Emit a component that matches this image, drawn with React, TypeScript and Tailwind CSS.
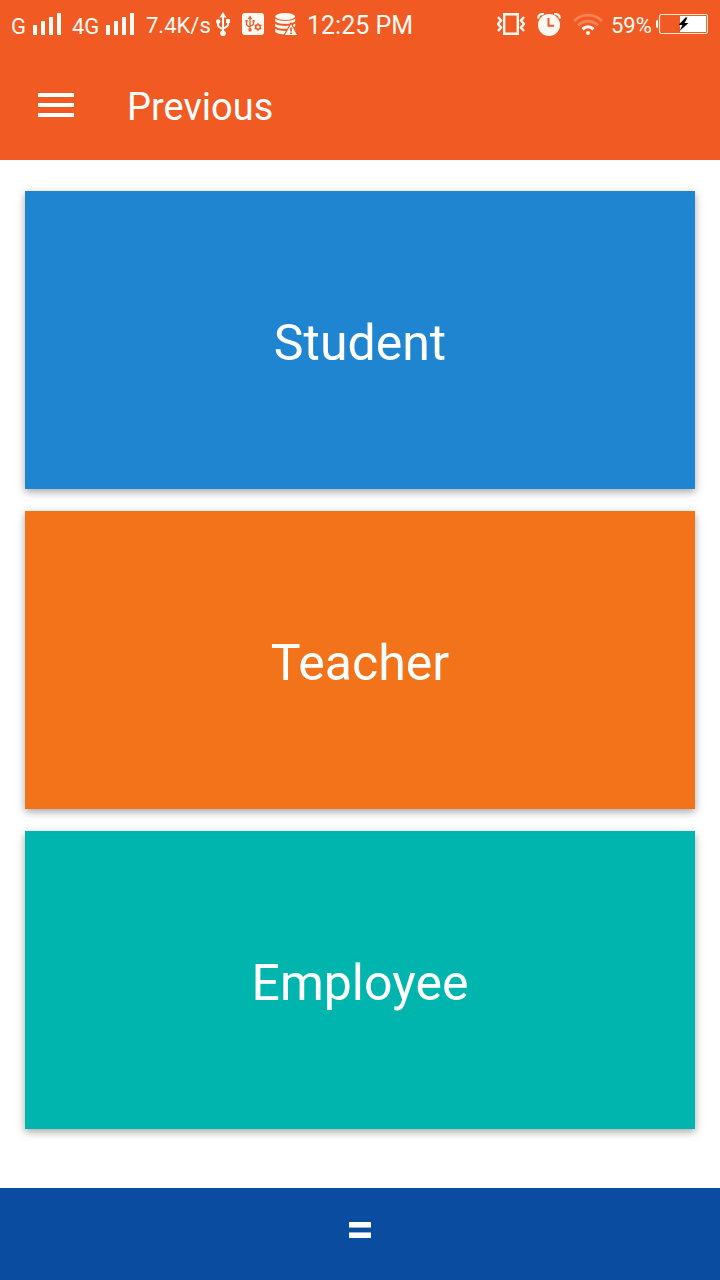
function SignalBars() {
  return (
    <svg className="h-[22px] w-7" viewBox="0 0 28 22" fill="currentColor" aria-hidden="true">
      <path d="M0 12h4v10H0zM8 8h4v14H8zM16 4h4v18h-4zM24 0h4v22h-4z" />
    </svg>
  );
}

function UsbIcon() {
  return (
    <svg className="h-6 w-[14px]" viewBox="0 0 14 24" fill="none" stroke="currentColor" strokeWidth="2" aria-hidden="true">
      <path d="M7 4v17M2 9v4c0 1.500 1 2.500 5 4M12 9v3.500c0 1.500-1 2.500-5 4" />
      <path d="M7 0l3.500 5.500h-7z" fill="currentColor" stroke="none" />
      <circle cx="2.200" cy="9.500" r="2.200" fill="currentColor" stroke="none" />
      <path d="M10 7h4v4h-4z" fill="currentColor" stroke="none" />
      <circle cx="7" cy="21.200" r="2.800" fill="currentColor" stroke="none" />
    </svg>
  );
}

function UsbSettingsIcon() {
  return (
    <svg className="h-[22px] w-[22px]" viewBox="0 0 22 22" fill="none" aria-hidden="true">
      <rect width="22" height="22" rx="3" fill="currentColor" />
      <g stroke="#f15a22" strokeWidth="1.300">
        <path d="M8 4v13M4.500 8v3c0 1.500 1 2 3.500 3M11.500 8v2.500c0 1.500-1 2-3.500 3" />
        <path d="M8 2.500l2.200 3.500H5.800zM3.500 7h2v2h-2zM10.500 7h2v2h-2z" fill="#f15a22" stroke="none" />
        <circle cx="8" cy="17" r="1.700" fill="#f15a22" stroke="none" />
        <circle cx="16" cy="14" r="2.300" strokeWidth="1.500" />
        <path d="M16 10.200v1.500M16 16.300v1.500M12.700 12.100l1.300.8M18 15.100l1.300.8M19.300 12.100l-1.300.8M14 15.100l-1.300.8" strokeWidth="1.600" />
      </g>
    </svg>
  );
}

function StorageAlertIcon() {
  return (
    <svg className="h-[23px] w-[23px]" viewBox="0 0 23 23" aria-hidden="true">
      <g fill="currentColor">
        <ellipse cx="10.200" cy="3.500" rx="10" ry="3.500" />
        <path d="M.2 5.500c2 3.200 18 3.200 20 0v2.800c-2 3.400-18 3.400-20 0z" />
        <path d="M.2 10.500c2 3.200 18 3.200 20 0v2.800c-2 3.400-18 3.400-20 0z" />
        <path d="M.2 15.500c2 3.200 18 3.200 20 0v3c-2 3.800-18 3.800-20 0z" />
      </g>
      <path d="M16 10l7 12.500H9z" fill="currentColor" stroke="#f15a22" strokeWidth="1.200" />
      <path d="M15.200 14.500h1.700v4h-1.700zM15.200 19.500h1.700v1.600h-1.700z" fill="#f15a22" />
    </svg>
  );
}

function VibrateIcon() {
  return (
    <svg className="h-[22px] w-7" viewBox="0 0 28 22" fill="none" stroke="currentColor" aria-hidden="true">
      <path d="M7.200 1.200h13.600v19.600H7.200z" strokeWidth="2.400" />
      <path d="M1 4l3 3.500-3 3.500 3 3.500L1 18M27 4l-3 3.500 3 3.500-3 3.500 3 3.500" strokeWidth="2.400" />
    </svg>
  );
}

function AlarmIcon() {
  return (
    <svg className="h-[23px] w-6" viewBox="0 0 24 23" aria-hidden="true">
      <circle cx="12" cy="12" r="11" fill="currentColor" />
      <path d="M1.200 5.500C1 2.500 3.500.5 6.800 1M22.800 5.500C23 2.500 20.500.5 17.200 1" fill="none" stroke="currentColor" strokeWidth="2.200" />
      <path d="M11.500 5v7.800H17" fill="none" stroke="#f15a22" strokeWidth="2" />
    </svg>
  );
}

function WifiIcon() {
  return (
    <svg className="h-[22px] w-[30px]" viewBox="0 0 30 22" fill="none" stroke="currentColor" strokeWidth="2.800" aria-hidden="true">
      <path d="M1 8C9 .2 21 .2 29 8" opacity=".25" />
      <path d="M5.200 12.200c5.600-5.300 14-5.300 19.600 0" opacity=".25" />
      <path d="M9.500 16.200c3.300-3 7.700-3 11 0" strokeWidth="3.200" />
      <circle cx="15" cy="20" r="2" fill="currentColor" stroke="none" />
    </svg>
  );
}

function BatteryIcon() {
  return (
    <svg className="h-5 w-[52px]" viewBox="0 0 52 20" aria-hidden="true">
      <path d="M2 6v8c-2 0-2-1-2-2V8c0-1 0-2 2-2z" fill="currentColor" />
      <rect x="3.500" y=".5" width="48" height="19" rx="2" fill="none" stroke="#ffe6cf" strokeWidth="1.200" />
      <path d="M24 2h26v16H24z" fill="#fff" />
      <path d="M29.500 3.500L22.500 11h4l-3 6L32.500 9h-4l3-5.500z" fill="#000" />
    </svg>
  );
}

const sections = [
  { label: "Student", color: "bg-[#1f85d0]" },
  { label: "Teacher", color: "bg-[#f3731b]" },
  { label: "Employee", color: "bg-[#00b5ad]" },
];

export default function App() {
  return (
    <div className="flex min-h-screen flex-col bg-white font-['Roboto',sans-serif] text-white">
      <header className="bg-[#f15a22]">
        <div className="flex h-12 items-center justify-between pr-3 pl-[11px] text-[22px] leading-[44px] whitespace-nowrap text-[#fffaf4]">
          <div className="flex items-center">
            <span className="w-[22px] pt-1.5">G</span>
            <SignalBars />
            <span className="ml-[11px] w-[34px] pt-1.5">4G</span>
            <SignalBars />
            <span className="ml-3 w-[70px] pt-1">7.4K/s</span>
            <UsbIcon />
            <span className="ml-3"><UsbSettingsIcon /></span>
            <span className="ml-[11px]"><StorageAlertIcon /></span>
            <span className="ml-[9px] pt-1 text-[25px]">12:25 PM</span>
          </div>
          <div className="flex items-center">
            <VibrateIcon />
            <span className="ml-3"><AlarmIcon /></span>
            <span className="ml-3"><WifiIcon /></span>
            <span className="ml-2 w-[45px] pt-1">59%</span>
            <BatteryIcon />
          </div>
        </div>
        <div className="flex h-28 items-center gap-[53px] px-[38px] pt-0.5">
          <button type="button" aria-label="Menu">
            <svg className="h-6 w-9" viewBox="0 0 36 24" fill="currentColor" aria-hidden="true">
              <path d="M0 0h36v4H0zM0 10h36v4H0zM0 20h36v4H0z" />
            </svg>
          </button>
          <h1 className="pt-1 text-[38px] leading-[48px]">Previous</h1>
        </div>
      </header>

      <main className="flex flex-1 flex-col gap-[22px] px-[25px] pt-[31px] pb-[59px]">
        {sections.map(({ label, color }) => (
          <button
            key={label}
            type="button"
            className={`min-h-40 flex-1 pt-1.5 text-[50px] shadow-[0_3px_8px_rgba(0,0,0,0.35)] ${color}`}
          >
            {label}
          </button>
        ))}
      </main>

      <footer className="flex h-[92px] items-center justify-center bg-[#0a4da0] pb-2.5">
        <button type="button" className="text-[50px] leading-[48px] font-bold">
          =
        </button>
      </footer>
    </div>
  );
}
